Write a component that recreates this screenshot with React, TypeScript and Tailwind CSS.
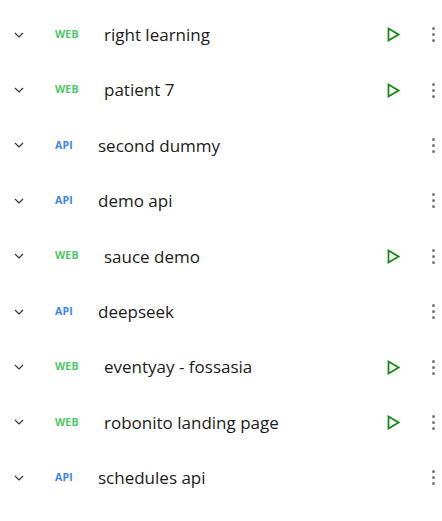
import React from 'react';

type Project = { name: string; kind: 'WEB' | 'API' };

const projects: Project[] = [
  { name: 'right learning', kind: 'WEB' },
  { name: 'patient 7', kind: 'WEB' },
  { name: 'second dummy', kind: 'API' },
  { name: 'demo api', kind: 'API' },
  { name: 'sauce demo', kind: 'WEB' },
  { name: 'deepseek', kind: 'API' },
  { name: 'eventyay - fossasia', kind: 'WEB' },
  { name: 'robonito landing page', kind: 'WEB' },
  { name: 'schedules api', kind: 'API' },
];

function Chevron() {
  return (
    <svg width="10" height="6" viewBox="0 0 10 6" fill="none" stroke="#333" strokeWidth="1.2">
      <path d="M1 1l4 4 4-4" />
    </svg>
  );
}

function Play() {
  return (
    <svg width="13" height="15" viewBox="0 0 13 15" fill="none" stroke="#1a8a1a" strokeWidth="1.8" strokeLinejoin="miter">
      <path d="M1.5 1.5v12l10-6z" />
    </svg>
  );
}

function Kebab() {
  return (
    <div className="flex flex-col items-center gap-[3px]">
      <span className="block w-[3px] h-[3px] rounded-full bg-[#777]" />
      <span className="block w-[3px] h-[3px] rounded-full bg-[#777]" />
      <span className="block w-[3px] h-[3px] rounded-full bg-[#777]" />
    </div>
  );
}

function Row({ project }: { project: Project }) {
  const isWeb = project.kind === 'WEB';
  return (
    <div className="flex items-center h-[55.4px]">
      <div className="w-[16px] ml-[14px] flex justify-start">
        <Chevron />
      </div>
      <span
        className={
          isWeb
            ? 'ml-[25px] w-[26px] text-[10.5px] font-bold tracking-[0.2px] text-[#4cc764]'
            : 'ml-[25px] w-[20px] text-[10.5px] font-bold tracking-[0.2px] text-[#3b82f6]'
        }
      >
        {project.kind}
      </span>
      <span className="ml-[23px] text-[17px] text-[#1a1a1a]">{project.name}</span>
      <div className="flex-1" />
      <div className="w-[16px] mr-[29px] flex justify-center">{isWeb && <Play />}</div>
      <div className="w-[6px] mr-[6px] flex justify-center">
        <Kebab />
      </div>
    </div>
  );
}

export default function App() {
  return (
    <div className="w-[442px] h-[521px] bg-white pt-[7px] font-['Open_Sans',sans-serif]">
      {projects.map((p) => (
        <Row key={p.name} project={p} />
      ))}
    </div>
  );
}
